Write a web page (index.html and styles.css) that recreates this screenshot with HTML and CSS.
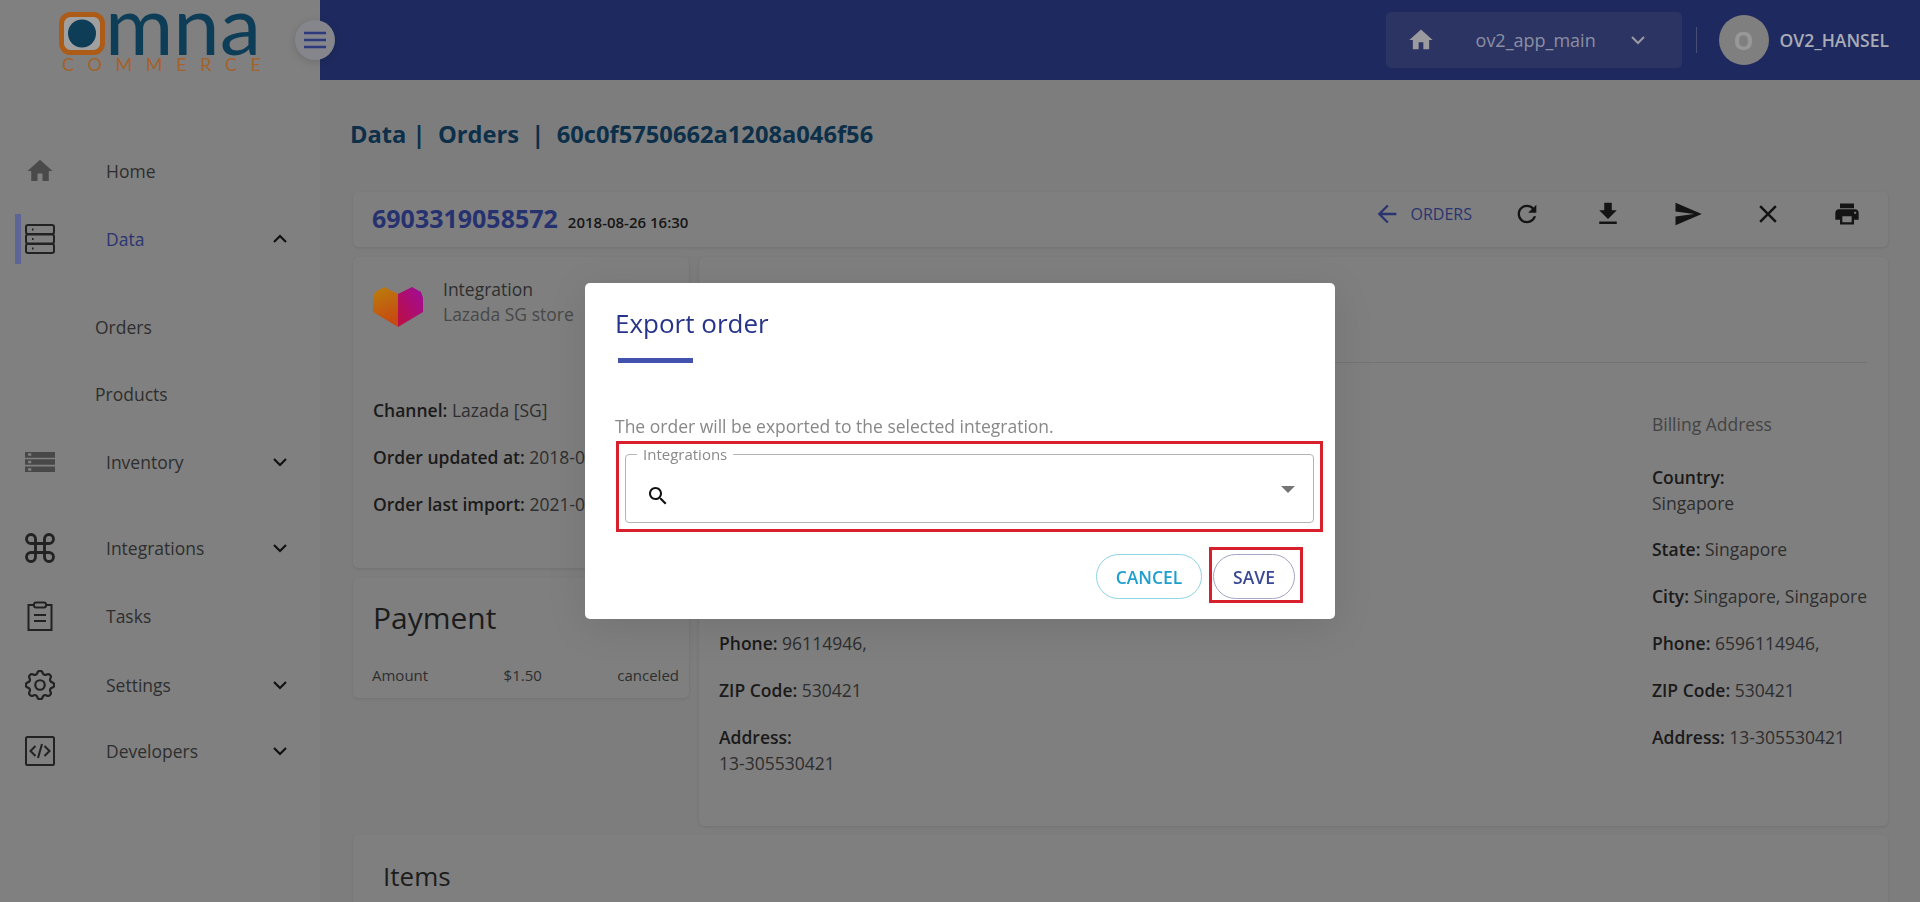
FILE: index.html
```html
<!DOCTYPE html>
<html lang="en">
<head>
<meta charset="utf-8">
<title>Export order</title>
<link rel="stylesheet" href="styles.css">
</head>
<body>
<div class="app">
  <aside class="sidebar">
    <div class="logo">
      <svg class="logo-svg" viewBox="0 0 320 80" width="320" height="80" aria-label="omna commerce">
        <rect x="61.500" y="14.500" width="41" height="38" rx="9" class="logo-ring"/>
        <circle cx="82" cy="33.500" r="14" class="logo-dot"/>
        <text x="105" y="55" class="logo-word" textLength="156" lengthAdjust="spacingAndGlyphs">mna</text>
        <text x="62" y="71" class="logo-sub" textLength="199" lengthAdjust="spacing">COMMERCE</text>
      </svg>
    </div>
    <button class="toggle" type="button" aria-label="Toggle menu">
      <svg viewBox="0 0 24 24" width="24" height="24"><path d="M1 5h22M1 12h22M1 19h22" class="toggle-lines"/></svg>
    </button>
    <nav class="nav">
      <a class="nav-item">
        <svg class="nav-icon fill" viewBox="0 0 24 24"><path d="M10 20v-6h4v6h5v-8h3L12 3 2 12h3v8z"/></svg>
        <span class="nav-label">Home</span>
      </a>
      <a class="nav-item active mt-20">
        <svg class="nav-icon line" viewBox="0 0 30 30"><rect x="1" y="1" width="28" height="9" rx="2"/><rect x="1" y="10.500" width="28" height="9" rx="2"/><rect x="1" y="20" width="28" height="9" rx="2"/><path d="M7 5.500h1.500M7 15h1.500M7 24.500h1.500"/></svg>
        <span class="nav-label">Data</span>
        <svg class="chev" viewBox="0 0 16 10"><path d="M2 8l6-6 6 6"/></svg>
      </a>
      <a class="nav-sub mt-40">Orders</a>
      <a class="nav-sub mt-19">Products</a>
      <a class="nav-item mt-20">
        <svg class="nav-icon fill soft" viewBox="0 0 24 24"><path d="M0 20h24v-4.500H0V20zm2.500-3h2.500v2H2.500v-2zM0 4v4.500h24V4H0zm5 3H2.500V5H5v2zM0 14.200h24V9.800H0v4.400zm2.500-3.200H5v2H2.500v-2z"/></svg>
        <span class="nav-label">Inventory</span>
        <svg class="chev" viewBox="0 0 16 10"><path d="M2 2l6 6 6-6"/></svg>
      </a>
      <a class="nav-item mt-38">
        <svg class="nav-icon line" viewBox="2 2 20 20"><path d="M18 3a3 3 0 0 0-3 3v12a3 3 0 0 0 3 3 3 3 0 0 0 3-3 3 3 0 0 0-3-3H6a3 3 0 0 0-3 3 3 3 0 0 0 3 3 3 3 0 0 0 3-3V6a3 3 0 0 0-3-3 3 3 0 0 0-3 3 3 3 0 0 0 3 3h12a3 3 0 0 0 3-3 3 3 0 0 0-3-3z"/></svg>
        <span class="nav-label">Integrations</span>
        <svg class="chev" viewBox="0 0 16 10"><path d="M2 2l6 6 6-6"/></svg>
      </a>
      <a class="nav-item mt-20">
        <svg class="nav-icon line" viewBox="0 0 30 30"><path d="M9 4H3.500v25h23V4H21"/><rect x="9" y="1.500" width="12" height="5" rx="2"/><path d="M9 14h12M9 20h12"/></svg>
        <span class="nav-label">Tasks</span>
      </a>
      <a class="nav-item mt-21">
        <svg class="nav-icon line" viewBox="2.500 2.500 19 19"><path d="M10.325 4.317c.426-1.756 2.924-1.756 3.35 0a1.724 1.724 0 0 0 2.573 1.066c1.543-.94 3.31.826 2.37 2.37a1.724 1.724 0 0 0 1.065 2.572c1.756.426 1.756 2.924 0 3.35a1.724 1.724 0 0 0-1.066 2.573c.94 1.543-.826 3.31-2.37 2.37a1.724 1.724 0 0 0-2.572 1.065c-.426 1.756-2.924 1.756-3.35 0a1.724 1.724 0 0 0-2.573-1.066c-1.543.94-3.31-.826-2.37-2.37a1.724 1.724 0 0 0-1.065-2.572c-1.756-.426-1.756-2.924 0-3.35a1.724 1.724 0 0 0 1.066-2.573c-.94-1.543.826-3.31 2.37-2.37.996.608 2.296.07 2.572-1.065z"/><circle cx="12" cy="12" r="3"/></svg>
        <span class="nav-label">Settings</span>
        <svg class="chev" viewBox="0 0 16 10"><path d="M2 2l6 6 6-6"/></svg>
      </a>
      <a class="nav-item mt-18">
        <svg class="nav-icon line" viewBox="0 0 30 30"><rect x="1" y="1" width="28" height="28" rx="1.500"/><path d="M10.500 10l-5 5 5 5M19.500 10l5 5-5 5M17 8l-4 14"/></svg>
        <span class="nav-label">Developers</span>
        <svg class="chev" viewBox="0 0 16 10"><path d="M2 2l6 6 6-6"/></svg>
      </a>
    </nav>
  </aside>

  <div class="main">
    <header class="topbar">
      <div class="app-select">
        <svg class="app-home" viewBox="0 0 24 24"><path d="M10 20v-6h4v6h5v-8h3L12 3 2 12h3v8z"/></svg>
        <span class="app-name">ov2_app_main</span>
        <svg class="app-chev" viewBox="0 0 16 10"><path d="M2 2l6 6 6-6"/></svg>
      </div>
      <span class="topbar-sep"></span>
      <span class="avatar">O</span>
      <span class="user-name">OV2_HANSEL</span>
    </header>

    <div class="content">
      <h1 class="crumb">Data |&nbsp; Orders &nbsp;|&nbsp; 60c0f5750662a1208a046f56</h1>

      <section class="card toolbar">
        <span class="order-no">6903319058572</span>
        <span class="order-date">2018-08-26 16:30</span>
        <a class="back">
          <svg class="back-icon" viewBox="0 0 24 24"><path d="M20 11H7.830l5.590-5.590L12 4l-8 8 8 8 1.410-1.410L7.830 13H20v-2z"/></svg>
          ORDERS
        </a>
        <svg class="tool t-refresh" viewBox="0 0 24 24"><path d="M17.650 6.350C16.200 4.900 14.210 4 12 4c-4.420 0-7.990 3.580-7.990 8s3.570 8 7.990 8c3.730 0 6.840-2.550 7.730-6h-2.080c-.82 2.330-3.040 4-5.650 4-3.310 0-6-2.690-6-6s2.690-6 6-6c1.660 0 3.140.69 4.220 1.780L13 11h7V4l-2.350 2.350z"/></svg>
        <svg class="tool t-down" viewBox="0 0 24 24"><path d="M19 9h-4V3H9v6H5l7 7 7-7zM5 18v2h14v-2H5z"/></svg>
        <svg class="tool t-send" viewBox="0 0 24 24"><path d="M2.010 21L23 12 2.010 3 2 10l15 2-15 2z"/></svg>
        <svg class="tool t-close" viewBox="0 0 24 24"><path d="M19 6.410L17.590 5 12 10.590 6.410 5 5 6.410 10.590 12 5 17.590 6.410 19 12 13.410 17.590 19 19 17.590 13.410 12z"/></svg>
        <svg class="tool t-print" viewBox="0 0 24 24"><path d="M19 8H5c-1.660 0-3 1.340-3 3v6h4v4h12v-4h4v-6c0-1.660-1.340-3-3-3zm-3 11H8v-5h8v5zm3-7c-.55 0-1-.45-1-1s.45-1 1-1 1 .45 1 1-.45 1-1 1zm-1-9H6v4h12V3z"/></svg>
      </section>

      <div class="columns">
        <div class="left-col">
          <section class="card info">
            <div class="integration">
              <svg class="heart" viewBox="0 0 50 41">
                <defs>
                  <linearGradient id="heartL" x1="0" y1="0" x2="0.300" y2="1"><stop offset="0" stop-color="#b9800c"/><stop offset="1" stop-color="#c74a12"/></linearGradient>
                  <linearGradient id="heartR" x1="1" y1="0" x2="0" y2="1"><stop offset="0" stop-color="#a00c9c"/><stop offset="1" stop-color="#bd0f3f"/></linearGradient>
                </defs>
                <path d="M25 8L11 1 2 6 0 12v14l25 15z" fill="url(#heartL)"/>
                <path d="M25 8l14-7 9 5 2 6v14L25 41z" fill="url(#heartR)"/>
              </svg>
              <div>
                <div class="int-title">Integration</div>
                <div class="int-name">Lazada SG store</div>
              </div>
            </div>
            <p class="info-row first"><b>Channel:</b> Lazada [SG]</p>
            <p class="info-row"><b>Order updated at:</b> 2018-08-26 16:30</p>
            <p class="info-row"><b>Order last import:</b> 2021-06-18 09:12</p>
          </section>
          <section class="card payment">
            <h2 class="payment-title">Payment</h2>
            <div class="payment-row"><span>Amount</span><span>$1.50</span><span>canceled</span></div>
          </section>
        </div>

        <section class="card details">
          <div class="details-head"></div>
          <div class="addresses">
            <div class="address shipping">
              <p class="addr-row"><b>Phone:</b> 96114946,</p>
              <p class="addr-row"><b>ZIP Code:</b> 530421</p>
              <p class="addr-row"><b>Address:</b><br>13-305530421</p>
            </div>
            <div class="address billing">
              <div class="addr-title">Billing Address</div>
              <p class="addr-row country"><b>Country:</b><br>Singapore</p>
              <p class="addr-row"><b>State:</b> Singapore</p>
              <p class="addr-row"><b>City:</b> Singapore, Singapore</p>
              <p class="addr-row"><b>Phone:</b> 6596114946,</p>
              <p class="addr-row"><b>ZIP Code:</b> 530421</p>
              <p class="addr-row"><b>Address:</b> 13-305530421</p>
            </div>
          </div>
        </section>
      </div>

      <section class="card items">
        <h2 class="items-title">Items</h2>
      </section>
    </div>
  </div>
</div>

<div class="backdrop">
  <div class="modal" role="dialog" aria-label="Export order">
    <h2 class="modal-title">Export order</h2>
    <div class="modal-rule"></div>
    <p class="modal-text">The order will be exported to the selected integration.</p>
    <div class="mark mark-field">
      <div class="field">
        <span class="field-label">Integrations</span>
        <svg class="field-search" viewBox="0 0 24 24"><path d="M15.500 14h-.79l-.28-.27C15.410 12.590 16 11.110 16 9.500 16 5.910 13.090 3 9.500 3S3 5.910 3 9.500 5.910 16 9.500 16c1.610 0 3.090-.59 4.230-1.570l.27.28v.79l5 4.990L20.490 19l-4.990-5zm-6 0C7.010 14 5 11.990 5 9.500S7.010 5 9.500 5 14 7.010 14 9.500 11.990 14 9.500 14z"/></svg>
        <span class="field-arrow"></span>
      </div>
    </div>
    <div class="modal-actions">
      <button class="btn btn-cancel" type="button">CANCEL</button>
      <div class="mark mark-save">
        <button class="btn btn-save" type="button">SAVE</button>
      </div>
    </div>
  </div>
</div>
</body>
</html>
```

FILE: styles.css
```css
* { box-sizing: border-box; }
html, body { margin: 0; height: 100%; overflow: hidden; }
body {
  font-family: "Open Sans", "Liberation Sans", sans-serif;
  font-size: 17.500px;
  color: #2c2c2c;
  background: #7d7d7d;
}
.app { display: flex; height: 902px; }

/* sidebar */
.sidebar { position: relative; flex: 0 0 320px; background: #808080; }
.logo { height: 80px; }
.logo-svg { display: block; }
.logo-ring { fill: #a0a0a0; stroke: #ad5c17; stroke-width: 5; }
.logo-dot { fill: #0e3d58; }
.logo-word { font-family: "Lato", sans-serif; font-size: 82px; font-weight: 400; fill: #0e3d58; }
.logo-sub { font-family: "Lato", sans-serif; font-size: 18px; fill: #a5622a; }
.toggle {
  position: absolute; left: 295px; top: 20px; z-index: 2;
  display: flex; align-items: center; justify-content: center;
  width: 40px; height: 40px; padding: 0; border: 0; border-radius: 50%;
  background: #85868c; box-shadow: 0 2px 8px rgba(0, 0, 0, .15);
}
.toggle-lines { fill: none; stroke: #2d3a7c; stroke-width: 2.600; }

.nav { display: flex; flex-direction: column; padding-top: 67px; }
.nav-item, .nav-sub { display: flex; align-items: center; height: 48px; color: #2e2e2e; }
.nav-item { position: relative; padding-left: 25px; }
.nav-sub { padding-left: 95px; }
.nav-icon { flex: 0 0 30px; width: 30px; height: 30px; }
.nav-icon.fill { fill: #4a4a4a; }
.nav-icon.soft { fill: #484848; }
.nav-icon.line { fill: none; stroke: #222; stroke-width: 2; }
.nav-icon.line[viewBox="2 2 20 20"] { stroke-width: 1.900; }
.nav-icon.line[viewBox="2.500 2.500 19 19"] { stroke-width: 1.400; }
.nav-label { margin-left: 51px; }
.chev { position: absolute; left: 272px; top: 19px; width: 16px; height: 10px; fill: none; stroke: #111; stroke-width: 2.200; }
.active .nav-label { color: #2a3470; }
.active::before {
  content: ""; position: absolute; left: 15px; top: -1px;
  width: 6px; height: 50px; background: #5c6595;
}
.mt-18 { margin-top: 18px; }
.mt-19 { margin-top: 19px; }
.mt-20 { margin-top: 20px; }
.mt-21 { margin-top: 21px; }
.mt-38 { margin-top: 38px; }
.mt-40 { margin-top: 40px; }

/* top bar */
.main { flex: 1; min-width: 0; display: flex; flex-direction: column; }
.topbar {
  flex: 0 0 80px; display: flex; align-items: center;
  padding-right: 31px; justify-content: flex-end;
  background: #1e2a5f;
}
.app-select {
  display: flex; align-items: center;
  width: 296px; height: 56px; padding-left: 21px;
  background: #2b3463; border-radius: 5px;
}
.app-home { width: 28px; height: 28px; fill: #9a9a9f; }
.app-name { margin-left: 41px; font-size: 18px; color: #8b8fa3; }
.app-chev { margin-left: 34px; width: 16px; height: 10px; fill: none; stroke: #9a9aa2; stroke-width: 2; }
.topbar-sep { width: 1px; height: 26px; margin: 0 22px 0 14px; background: #474f79; }
.avatar {
  display: flex; align-items: center; justify-content: center;
  width: 50px; height: 50px; border-radius: 50%;
  font-size: 25px; font-weight: 700; color: #989898; background: #7f7f7f;
}
.user-name { margin-left: 11px; font-weight: 600; color: #a9abb5; }

/* content */
.content { flex: 1; min-height: 0; padding: 39px 32px 0 33px; overflow: hidden; }
.crumb { margin: 0 0 43px -3px; font-size: 23.700px; line-height: 30px; font-weight: 700; color: #0c2f4a; }
.card { background: #7f7f7f; border-radius: 5px; box-shadow: 0 1px 3px rgba(0, 0, 0, .1); }
.toolbar { display: flex; align-items: center; height: 55px; padding: 0 27px 11px 19px; }
.order-no { margin-top: 7px; font-size: 25px; font-weight: 700; color: #263270; }
.order-date { margin: 15px 0 0 10px; font-size: 15px; font-weight: 600; color: #161616; }
.back {
  display: flex; align-items: center; margin-left: auto;
  font-size: 16px; font-weight: 500; color: #2a3470;
}
.back-icon { width: 28px; height: 28px; margin-right: 10px; fill: #2a3470; }
.tool { width: 30px; height: 30px; fill: #141414; flex: none; }
.t-refresh { margin-left: 41px; width: 28px; height: 28px; }
.t-down { margin-left: 52px; }
.t-send { margin-left: 50px; }
.t-close { margin-left: 50px; }
.t-print { margin-left: 50px; width: 28px; height: 28px; }

.columns { display: flex; gap: 10px; margin-top: 10px; }
.left-col { flex: 0 0 336px; display: flex; flex-direction: column; gap: 10px; }
.info { height: 311px; padding: 20px 20px 0; overflow: hidden; }
.integration { display: flex; align-items: flex-start; gap: 20px; }
.heart { flex: 0 0 50px; width: 50px; height: 41px; margin-top: 9px; }
.int-title { line-height: 25px; color: #2e2e2e; }
.int-name { line-height: 25px; color: #484848; }
.info-row { width: 212px; margin: 21px 0 0; overflow: hidden; line-height: 26px; color: #2e2e2e; white-space: nowrap; }
.info-row.first { margin-top: 70px; }
b { font-weight: 600; color: #1a1a1a; }
.payment { height: 120px; padding: 20px 10px 0 19px; }
.payment-title { margin: 0 0 0 1px; font-size: 30px; line-height: 40px; font-weight: 400; color: #1c1c1c; }
.payment-row {
  display: flex; justify-content: space-between;
  margin-top: 27px; font-size: 15px; line-height: 20px; color: #2e2e2e;
}

.details { flex: 1; height: 569px; padding: 0 21px 0 20px; }
.details-head { height: 106px; border-bottom: 1px solid #737373; }
.addresses { display: flex; justify-content: space-between; padding-top: 48px; }
.shipping { padding-top: 219px; }
.billing { white-space: nowrap; }
.addr-title { line-height: 26px; margin-bottom: 27px; color: #444; }
.addr-row { margin: 0 0 21px; line-height: 26px; color: #2e2e2e; }
.addr-row.country { margin-bottom: 20px; }

.items { height: 200px; margin-top: 9px; padding: 24px 30px; }
.items-title { margin: 0; font-size: 26px; line-height: 34px; font-weight: 500; color: #1c1c1c; }

/* dialog */
.backdrop {
  position: fixed; inset: 0; z-index: 10;
  display: flex; align-items: center; justify-content: center;
}
.modal {
  width: 750px; padding: 24px 0 16px 30px;
  background: #fff; border-radius: 5px;
  box-shadow: 0 8px 40px rgba(0, 0, 0, .1);
}
.modal-title { margin: 0; font-size: 26px; line-height: 32px; font-weight: 500; color: #27348b; }
.modal-rule { width: 75px; height: 5px; margin: 19px 0 0 3px; background: #4352ad; }
.modal-text { margin: 51px 0 3px; line-height: 24px; color: #888; }
.mark { border: 3px solid #d81f2c; }
.mark-field { width: 707px; margin-left: 1px; padding: 10px 6px 6px; }
.field {
  position: relative; display: flex; justify-content: space-between;
  height: 69px; padding: 31px 18px 0 22px;
  border: 1px solid #b4b4b4; border-radius: 4px;
}
.field-label {
  position: absolute; left: 11px; top: -10px; padding: 0 6px;
  font-size: 15px; line-height: 18px; color: #8a8a8a; background: #fff;
}
.field-search { width: 24px; height: 24px; fill: #111; margin-top: -2px; margin-left: -2px; }
.field-arrow {
  width: 0; height: 0;
  border-left: 7px solid transparent; border-right: 7px solid transparent;
  border-top: 7px solid #757575;
}
.modal-actions { display: flex; justify-content: flex-end; align-items: flex-start; gap: 7px; margin-top: 15px; padding-right: 32px; }
.btn {
  height: 45px; padding: 0; border-radius: 23px; background: #fff;
  font-family: inherit; font-size: 17.500px; font-weight: 600;
}
.btn-cancel { width: 106px; margin-top: 7px; color: #1e9fd0; border: 1px solid #8fd4e4; }
.mark-save { width: 94px; height: 56px; padding: 4px 5px 1px 1px; }
.btn-save { width: 82px; color: #3a4896; border: 1px solid #a3a6c4; }
```
